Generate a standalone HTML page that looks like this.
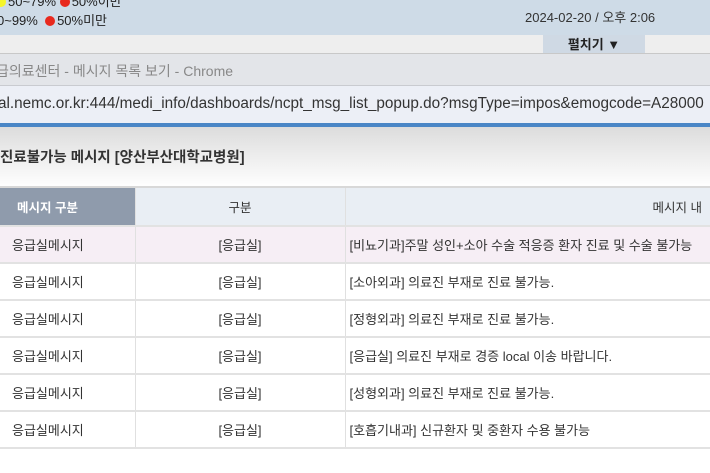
<!DOCTYPE html>
<html><head><meta charset="utf-8"><style>
*{margin:0;padding:0;box-sizing:border-box}
body{width:710px;height:473px;overflow:hidden;background:#fff;font-family:"Liberation Sans","Noto Sans CJK KR",sans-serif;position:relative;color:#333}
.a{position:absolute}
.dot{display:inline-block;width:10px;height:10px;border-radius:50%;vertical-align:-1px;margin-right:2px}
table{position:absolute;left:0;top:188px;width:740px;border-collapse:collapse;font-size:13px}
td,th{height:37px;border-bottom:2px solid #e2e2e2;border-right:1px solid #e0e0e0;font-weight:normal}
th{height:38px;font-size:12.5px}
td.c{text-align:center}
td.l{padding-left:12px}
td.m{padding-left:4px}
</style></head><body>
<div class="a" style="left:0;top:0;width:710px;height:35px;background:#cedbe7"></div>
<div class="a" style="left:-4px;top:-9px;font-size:13px;color:#222"><span class="dot" style="background:#f5f52a"></span>50~79% <span class="dot" style="background:#e8291e"></span>50%이만</div>
<div class="a" style="left:-3px;top:10px;font-size:13px;color:#222">0~99% &nbsp;<span class="dot" style="background:#e8291e"></span>50%미만</div>
<div class="a" style="left:525px;top:7px;font-size:13px;color:#333">2024-02-20 / 오후 2:06</div>
<div class="a" style="left:0;top:35px;width:710px;height:18px;background:#eeeeee"></div>
<div class="a" style="left:543px;top:35px;width:102px;height:18px;background:#cfd9e4;text-align:center;font-size:13px;font-weight:bold;color:#222;line-height:20px">펼치기 ▼</div>
<div class="a" style="left:0;top:53px;width:710px;height:33px;background:#e3e5e9;border-top:1px solid #c8c8c8;border-bottom:1px solid #c9cbd0"></div>
<div class="a" style="left:-4px;top:61px;font-size:14px;color:#888">급의료센터 - 메시지 목록 보기 - Chrome</div>
<div class="a" style="left:0;top:86px;width:710px;height:37px;background:#eceff6"></div>
<div class="a" style="left:-2px;top:95px;font-size:15.3px;color:#333;white-space:nowrap">al.nemc.or.kr:444/medi_info/dashboards/ncpt_msg_list_popup.do?msgType=impos&amp;emogcode=A28000</div>
<div class="a" style="left:0;top:123px;width:710px;height:4px;background:#4a86c6"></div>
<div class="a" style="left:0;top:127px;width:710px;height:60px;background:linear-gradient(#dcdcdc,#fff)"></div>
<div class="a" style="left:-4px;top:146px;font-size:14.5px;font-weight:bold;color:#333">/진료불가능 메시지 [양산부산대학교병원]</div>
<div class="a" style="left:0;top:186px;width:710px;height:2px;background:#d8d8d8"></div>
<table>
<tr style="background:#e9eef4"><th style="width:135px;background:#8f9bac;color:#fff;font-weight:bold;text-align:left;padding-left:17px">메시지 구분</th><th style="width:210px">구분</th><th style="text-align:center;padding-left:270px">메시지 내</th></tr>
<tr style="background:#f6eef5"><td class="l">응급실메시지</td><td class="c">[응급실]</td><td class="m">[비뇨기과]주말 성인+소아 수술 적응증 환자 진료 및 수술 불가능</td></tr>
<tr><td class="l">응급실메시지</td><td class="c">[응급실]</td><td class="m">[소아외과] 의료진 부재로 진료 불가능.</td></tr>
<tr><td class="l">응급실메시지</td><td class="c">[응급실]</td><td class="m">[정형외과] 의료진 부재로 진료 불가능.</td></tr>
<tr><td class="l">응급실메시지</td><td class="c">[응급실]</td><td class="m">[응급실] 의료진 부재로 경증 local 이송 바랍니다.</td></tr>
<tr><td class="l">응급실메시지</td><td class="c">[응급실]</td><td class="m">[성형외과] 의료진 부재로 진료 불가능.</td></tr>
<tr><td class="l">응급실메시지</td><td class="c">[응급실]</td><td class="m">[호흡기내과] 신규환자 및 중환자 수용 불가능</td></tr>
</table>
</body></html>
